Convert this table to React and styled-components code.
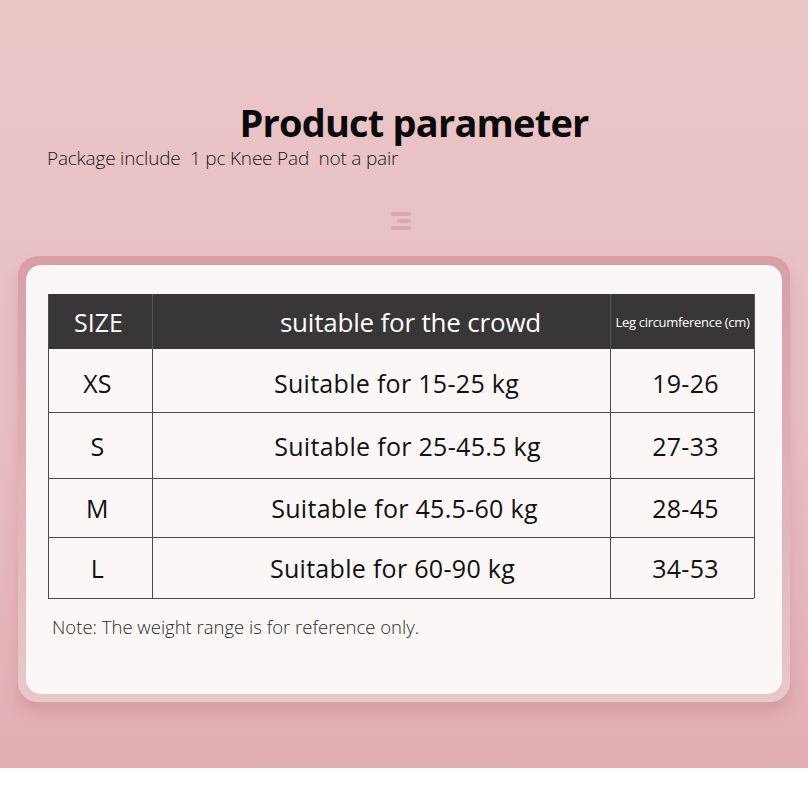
import React from "react";
import styled, { createGlobalStyle } from "styled-components";

const Global = createGlobalStyle`
  html, body { margin: 0; padding: 0; background: #ffffff; }
  body { font-family: "Open Sans", "Noto Sans", sans-serif; }
`;

const Page = styled.div`
  height: 768px;
  background: linear-gradient(180deg, #eac5c6 0%, #e8bfc3 55%, #e1adb3 100%);
  display: flex;
  flex-direction: column;
  align-items: stretch;
`;

const Title = styled.h1`
  margin: 99px 0 0;
  text-align: center;
  font-size: 38px;
  line-height: 46px;
  font-weight: 700;
  color: #0a0a0a;
  letter-spacing: -0.8px;
  padding-left: 20px;
`;

const Subtitle = styled.p`
  margin: 0 0 0 47px;
  font-size: 19px;
  line-height: 26px;
  font-weight: 300;
  color: #1a1a1a;
  letter-spacing: -0.2px;
  white-space: pre;
`;

const MenuMark = styled.div`
  align-self: center;
  margin: 41px 6px 0 0;
  width: 20px;
  display: flex;
  flex-direction: column;
  align-items: flex-end;
  gap: 3px;
`;

const Bar = styled.span`
  display: block;
  height: 4px;
  border-radius: 2px;
  width: ${(p) => p.$w}px;
  background: #dba7ae;
`;

const Frame = styled.div`
  margin: 26px 18px 0;
  padding: 9px 8px 8px;
  border-radius: 20px;
  background: linear-gradient(180deg, #d79ea6 0%, #e2b5ba 60%, #e8c8cb 100%);
  box-shadow: 0 10px 14px rgba(190, 120, 130, 0.35);
`;

const Card = styled.div`
  background: #fbf7f7;
  border-radius: 15px;
  height: 429px;
  padding: 29px 28px 0 22px;
  box-sizing: border-box;
`;

const Table = styled.div`
  display: grid;
  grid-template-columns: 104px 458px 144px;
  grid-template-rows: 55px 63px 66px 59px 61px;
  border-left: 1.5px solid #4a4a4a;
  border-bottom: 1.5px solid #4a4a4a;
  width: 706px;
  box-sizing: border-box;
`;

const HeadCell = styled.div`
  background: #383636;
  color: #ffffff;
  display: flex;
  align-items: center;
  justify-content: center;
  font-size: ${(p) => p.$size}px;
  padding-left: ${(p) => p.$pl || 0}px;
  padding-right: ${(p) => p.$pr || 0}px;
  letter-spacing: ${(p) => p.$ls || 0}px;
  white-space: nowrap;
  border-right: 1.5px solid ${(p) => (p.$last ? "#383636" : "#555")};
`;

const Cell = styled.div`
  display: flex;
  align-items: center;
  justify-content: center;
  font-size: 25px;
  color: #111;
  letter-spacing: 0.3px;
  border-right: 1.5px solid #4a4a4a;
  border-top: ${(p) => (p.$first ? "none" : "1.5px solid #4a4a4a")};
  padding-left: ${(p) => p.$pl || 0}px;
  padding-right: ${(p) => p.$pr || 0}px;
  padding-top: ${(p) => p.$pt || 0}px;
`;

const Note = styled.p`
  margin: 15px 0 0 4px;
  font-size: 18.5px;
  font-weight: 300;
  color: #2a2a2a;
  letter-spacing: 0px;
`;

const rows = [
  { size: "XS", text: "Suitable for 15-25 kg", leg: "19-26", pl: 30, pt: 4 },
  { size: "S", text: "Suitable for 25-45.5 kg", leg: "27-33", pl: 52, pt: 0 },
  { size: "M", text: "Suitable for 45.5-60 kg", leg: "28-45", pl: 46, pt: 0 },
  { size: "L", text: "Suitable for 60-90 kg", leg: "34-53", pl: 22, pt: 0 },
];

export default function App() {
  return (
    <>
      <Global />
      <Page>
        <Title>Product parameter</Title>
        <Subtitle>{"Package include  1 pc Knee Pad  not a pair"}</Subtitle>
        <MenuMark>
          <Bar $w={20} />
          <Bar $w={14} />
          <Bar $w={20} />
        </MenuMark>
        <Frame>
          <Card>
            <Table>
              <HeadCell $size={25} $pr={4}>SIZE</HeadCell>
              <HeadCell $size={26} $pl={58} $ls={-0.2}>suitable for the crowd</HeadCell>
              <HeadCell $size={13} $ls={-0.3}>Leg circumference (cm)</HeadCell>
              {rows.map((r, i) => (
                <React.Fragment key={r.size}>
                  <Cell $first={i === 0} $pt={r.pt} $pr={6}>{r.size}</Cell>
                  <Cell $first={i === 0} $pt={r.pt} $pl={r.pl}>{r.text}</Cell>
                  <Cell $first={i === 0} $pt={r.pt} $pl={6}>{r.leg}</Cell>
                </React.Fragment>
              ))}
            </Table>
            <Note>Note: The weight range is for reference only.</Note>
          </Card>
        </Frame>
      </Page>
    </>
  );
}
